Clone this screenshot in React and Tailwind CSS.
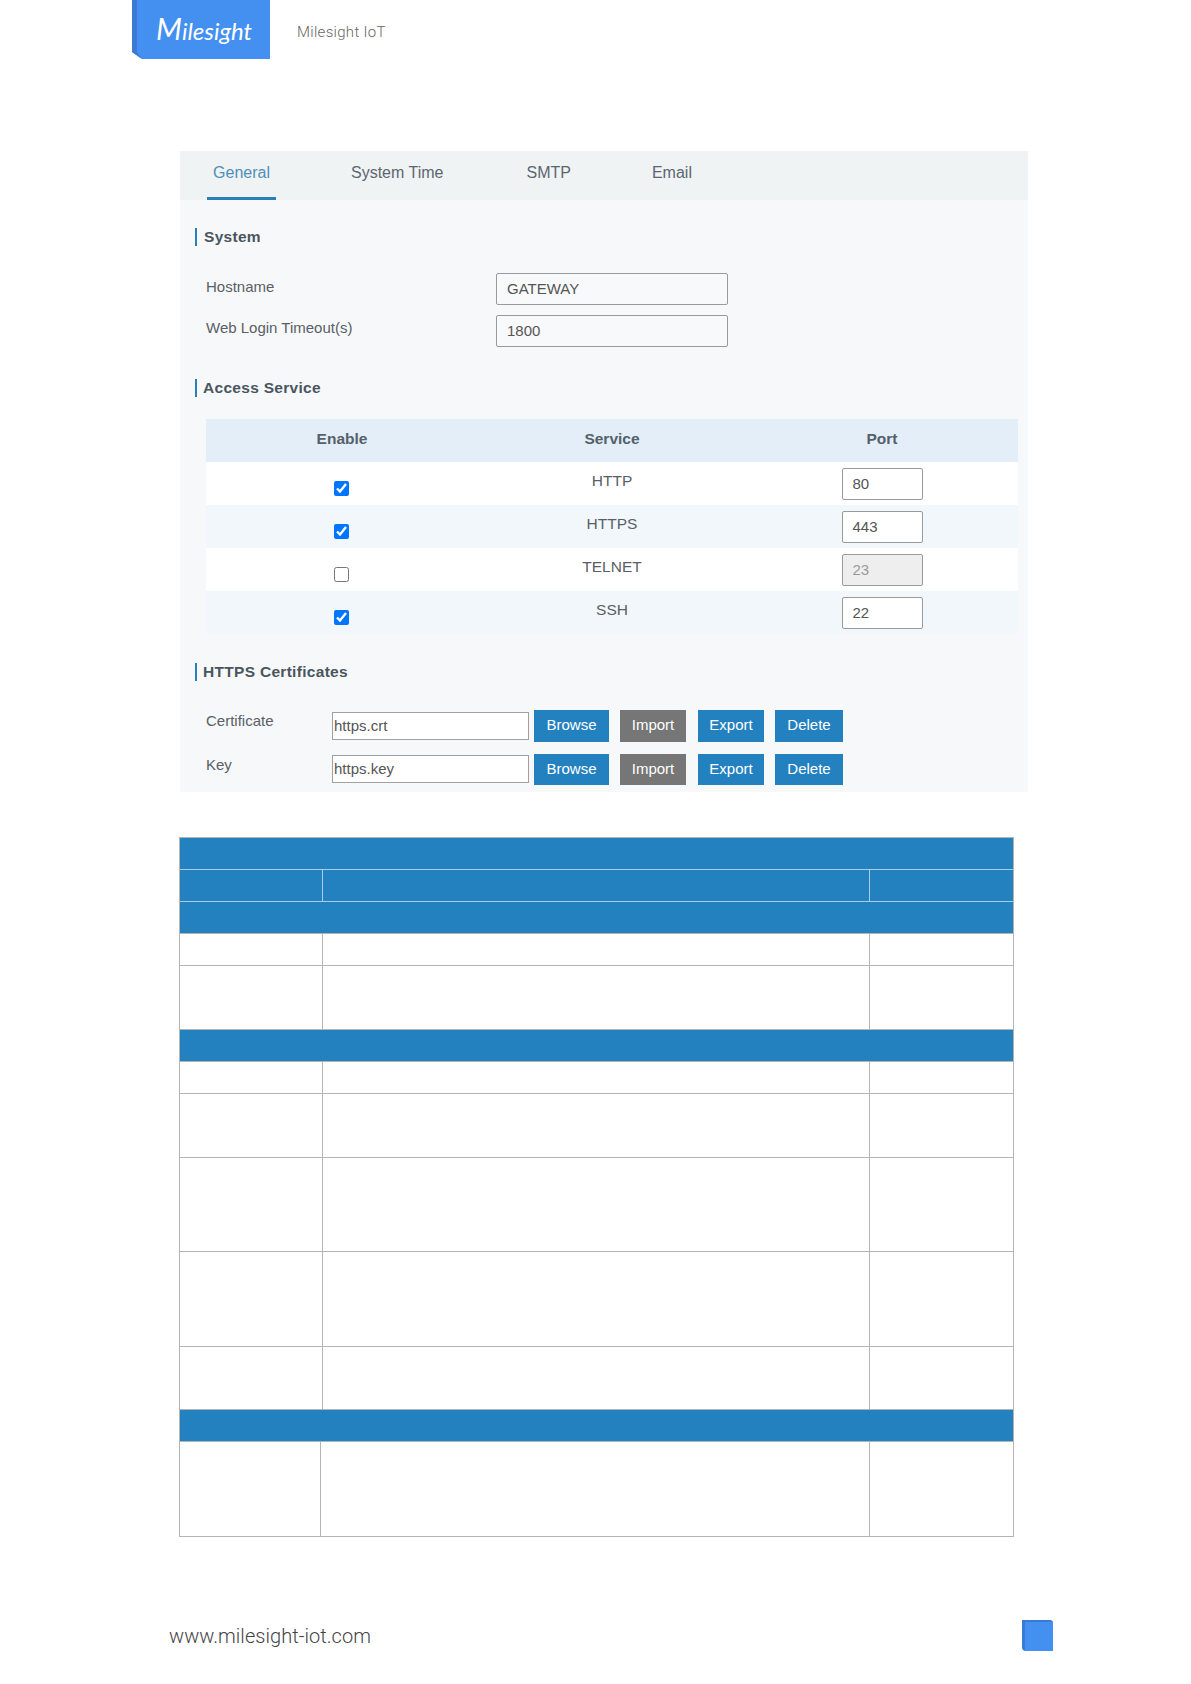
import React from 'react';

const tabs = [
    { label: 'General', active: true },
    { label: 'System Time' },
    { label: 'SMTP' },
    { label: 'Email' },
];

const services = [
    { name: 'HTTP', port: '80', on: true },
    { name: 'HTTPS', port: '443', on: true },
    { name: 'TELNET', port: '23', on: false },
    { name: 'SSH', port: '22', on: true },
];

const certs = [
    { label: 'Certificate', file: 'https.crt' },
    { label: 'Key', file: 'https.key' },
];

const SectionTitle = ({ children, className, gap = 'ml-[7px]' }) => (
    <div className={`flex items-center ml-[15px] h-[18px] ${className}`}>
        <span className="w-[2px] h-[18px] bg-[#2a7fb8]" />
        <span className={`${gap} text-[15.5px] font-bold text-[#4a5560] tracking-[0.3px]`}>{children}</span>
    </div>
);

const Btn = ({ children, gray, width, mr }) => (
    <button className={`${width} ${mr} h-full pb-[1px] text-[15px] text-white ${gray ? 'bg-[#767676]' : 'bg-[#2481c0]'}`}>
        {children}
    </button>
);

const Settings = () => (
    <section className="ml-[180px] mt-[92px] w-[848px] h-[641px] bg-[#f6f8f9] font-['Liberation_Sans',sans-serif]">
        {/* tab bar */}
        <div className="h-[49px] bg-[#f0f3f4] flex pl-[27px]">
            {tabs.map((t, i) => (
                <div
                    key={t.label}
                    className={`h-full flex items-start pt-[10px] text-[16px] ${t.active ? 'text-[#4c8fb8] border-b-[3px] border-[#2a7fb8] w-[69px] justify-center' : 'text-[#5c6670]'} ${i === 1 ? 'ml-[75px]' : ''} ${i === 2 ? 'ml-[83px]' : ''} ${i === 3 ? 'ml-[81px]' : ''}`}
                >
                    {t.label}
                </div>
            ))}
        </div>

        <SectionTitle className="mt-[28px]">System</SectionTitle>

        <div className="mt-[27px] ml-[26px] flex items-start h-[32px]">
            <span className="w-[290px] text-[15px] text-[#5a5f66] leading-[28px]">Hostname</span>
            <div className="w-[232px] h-[32px] border border-[#9a9a9a] rounded-[2px] bg-[#f8f9fa] pl-[10px] text-[15px] leading-[30px] text-[#555]">GATEWAY</div>
        </div>
        <div className="mt-[10px] ml-[26px] flex items-start h-[32px]">
            <span className="w-[290px] text-[15px] text-[#5a5f66] leading-[26px]">Web Login Timeout(s)</span>
            <div className="w-[232px] h-[32px] border border-[#9a9a9a] rounded-[2px] bg-[#f8f9fa] pl-[10px] text-[15px] leading-[29px] text-[#555]">1800</div>
        </div>

        <SectionTitle className="mt-[32px]" gap="ml-[6px]">Access Service</SectionTitle>

        <div className="mt-[22px] ml-[26px] w-[812px]">
            <div className="h-[43px] pb-[4px] bg-[#e3eef8] grid grid-cols-[272px_268px_272px] items-center text-center text-[15.5px] font-bold text-[#55606a]">
                <span>Enable</span>
                <span>Service</span>
                <span>Port</span>
            </div>
            {services.map((s, i) => (
                <div key={s.name} className={`h-[43px] grid grid-cols-[272px_268px_272px] text-center ${i % 2 ? 'bg-[#f2f7fc]' : 'bg-white'}`}>
                    <div className="pt-[19px] pr-[1px] flex justify-center items-start">
                        <input type="checkbox" defaultChecked={s.on} className="w-[15px] h-[15px] m-0" />
                    </div>
                    <div className="pt-[9px] text-[15.5px] text-[#5a5f66] leading-[20px]">{s.name}</div>
                    <div className="pt-[6px] flex justify-center items-start">
                        <div className={`w-[81px] h-[32px] border border-[#9a9a9a] rounded-[2px] pl-[10px] text-left text-[15px] leading-[29px] ${s.on ? 'bg-white text-[#555]' : 'bg-[#eeeeee] text-[#9a9a9a]'}`}>
                            {s.port}
                        </div>
                    </div>
                </div>
            ))}
        </div>

        <SectionTitle className="mt-[29px]" gap="ml-[6px]">HTTPS Certificates</SectionTitle>

        <div className="mt-[29px] ml-[26px] flex h-[32px]">
            <span className="w-[126px] text-[15px] text-[#5a5f66] leading-[22px]">{certs[0].label}</span>
            <div className="w-[197px] h-[28px] mt-[2px] border border-[#a0a0a0] bg-white pl-[1px] text-[15px] leading-[26px] text-[#555]">{certs[0].file}</div>
            <Btn width="w-[75px] ml-[5px]" mr="mr-[11px]">Browse</Btn>
            <Btn width="w-[66px]" mr="mr-[12px]" gray>Import</Btn>
            <Btn width="w-[66px]" mr="mr-[11px]">Export</Btn>
            <Btn width="w-[68px]">Delete</Btn>
        </div>
        <div className="mt-[12px] ml-[26px] flex h-[31px]">
            <span className="w-[126px] text-[15px] text-[#5a5f66] leading-[22px]">{certs[1].label}</span>
            <div className="w-[197px] h-[28px] mt-[1px] border border-[#a0a0a0] bg-white pl-[1px] text-[15px] leading-[26px] text-[#555]">{certs[1].file}</div>
            <Btn width="w-[75px] ml-[5px]" mr="mr-[11px]">Browse</Btn>
            <Btn width="w-[66px]" mr="mr-[12px]" gray>Import</Btn>
            <Btn width="w-[66px]" mr="mr-[11px]">Export</Btn>
            <Btn width="w-[68px]">Delete</Btn>
        </div>
    </section>
);

const Band = ({ h }) => <div className={`${h} bg-[#2481c0] border-b border-[#b4b4b4]`} />;

const Row = ({ h }) => (
    <div className={`${h} grid grid-cols-[143px_547px_1fr] border-b border-[#b4b4b4]`}>
        <div className="border-r border-[#b4b4b4]" />
        <div className="border-r border-[#b4b4b4]" />
        <div />
    </div>
);

const ParamTable = () => (
    <div className="ml-[179px] mt-[45px] w-[835px] border-l border-r border-t border-[#b4b4b4]">
        <div className="h-[32px] bg-[#2481c0] border-b border-[#a9cde6]" />
        <div className="h-[32px] bg-[#2481c0] border-b border-[#a9cde6] grid grid-cols-[143px_547px_1fr]">
            <div className="border-r border-[#a9cde6]" />
            <div className="border-r border-[#a9cde6]" />
            <div />
        </div>
        <Band h="h-[32px]" />
        <Row h="h-[32px]" />
        <Row h="h-[64px]" />
        <Band h="h-[32px]" />
        <Row h="h-[32px]" />
        <Row h="h-[64px]" />
        <Row h="h-[94px]" />
        <Row h="h-[95px]" />
        <Row h="h-[63px]" />
        <Band h="h-[32px]" />
        <div className="h-[95px] grid grid-cols-[141px_549px_1fr] border-b border-[#b4b4b4]">
            <div className="border-r border-[#b4b4b4]" />
            <div className="border-r border-[#b4b4b4]" />
            <div />
        </div>
    </div>
);

export default function App() {
    return (
        <div className="w-[1191px] h-[1684px] bg-white overflow-hidden">
            {/* page header */}
            <header className="h-[59px] flex items-center pl-[132px]">
                <div className="relative w-[138px] h-[59px]">
                    <svg className="absolute inset-0" width="138" height="59" viewBox="0 0 138 59">
                        <path d="M0 0H138V59H10L0 52Z" fill="#4490f0" />
                        <path d="M0 0H5V52L10 59L0 52Z" fill="#3a7ad4" />
                    </svg>
                    <div className="relative pl-[24px] pt-[12px] text-white italic font-['Lato',sans-serif] leading-[32px] text-[24px]">
                        <span className="text-[30px]">M</span>ilesight
                    </div>
                </div>
                <span className="ml-[27px] mt-[6px] text-[15px] tracking-[0.3px] text-[#666] font-['Roboto',sans-serif] font-light">Milesight IoT</span>
            </header>

            <Settings />
            <ParamTable />

            {/* page footer */}
            <footer className="mt-[83px] ml-[169px] flex items-center w-[884px] justify-between h-[32px]">
                <span className="text-[20px] tracking-[0.05px] text-[#444] font-['Roboto',sans-serif] font-light">www.milesight-iot.com</span>
                <div className="relative w-[31px] h-[31px] mb-[2px] bg-[#3a7ad4] rounded-tr-[3px] rounded-bl-[4px]">
                    <div className="absolute right-0 bottom-0 w-[28px] h-[29px] bg-[#4490f0]" />
                </div>
            </footer>
        </div>
    );
}
